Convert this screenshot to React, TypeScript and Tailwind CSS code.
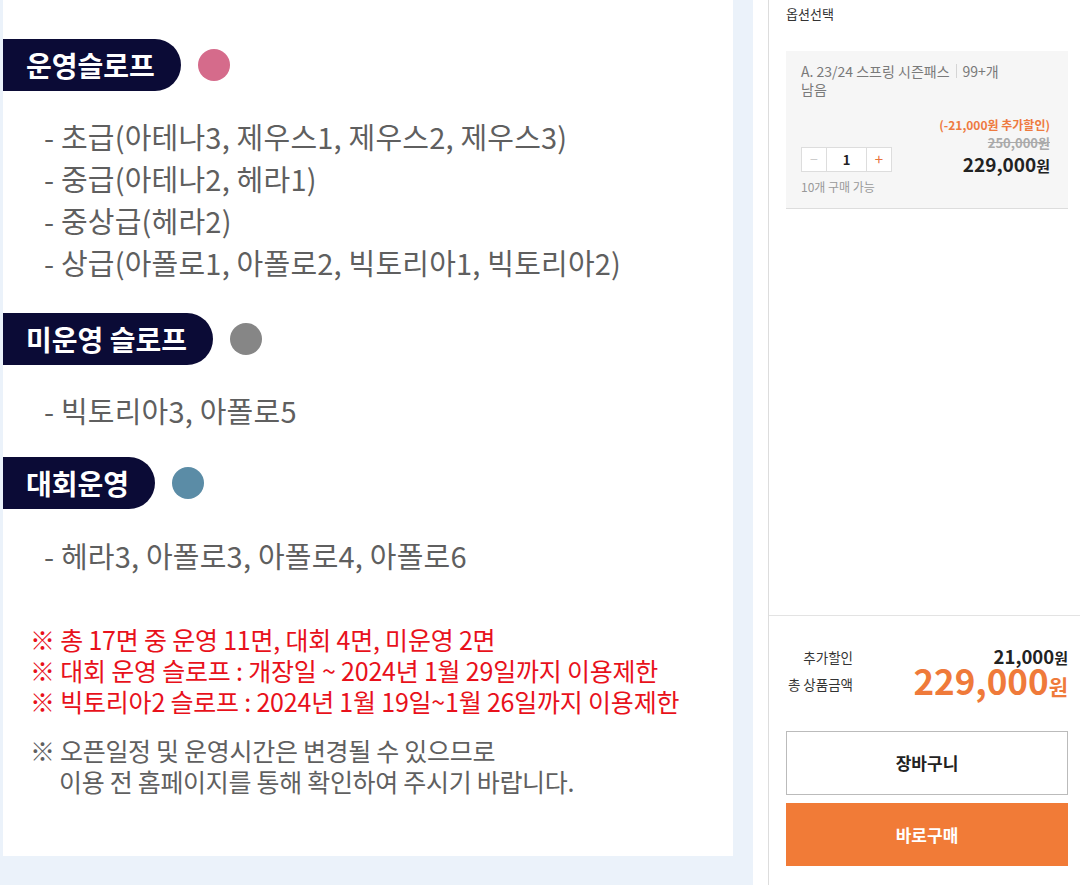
const KR = "font-['Noto_Sans_CJK_KR',_'Noto_Sans',_sans-serif]";

function Pill({ label, dot }: { label: string; dot: string }) {
  return (
    <div className="flex items-center">
      <div className="h-[52px] flex items-center bg-[#0b0b36] rounded-r-full pl-[23px] pr-[26px] text-white text-[28px] font-bold leading-none">
        {label}
      </div>
      <div className={`ml-[17px] w-[32px] h-[32px] rounded-full ${dot}`} />
    </div>
  );
}

function Lines({ items, className }: { items: string[]; className: string }) {
  return (
    <div className={`pl-[41px] text-[29px] leading-[42px] text-[#5f5f5f] tracking-[0.2px] ${className}`}>
      {items.map((t) => (
        <div key={t}>- {t}</div>
      ))}
    </div>
  );
}

function Poster() {
  return (
    <div className="w-[730px] h-[856px] bg-white pt-[39px]">
      <Pill label="운영슬로프" dot="bg-[#d56b8b]" />
      <Lines
        className="mt-[24px]"
        items={[
          "초급(아테나3, 제우스1, 제우스2, 제우스3)",
          "중급(아테나2, 헤라1)",
          "중상급(헤라2)",
          "상급(아폴로1, 아폴로2, 빅토리아1, 빅토리아2)",
        ]}
      />
      <div className="mt-[30px]">
        <Pill label="미운영 슬로프" dot="bg-[#868686]" />
      </div>
      <Lines className="mt-[24px]" items={["빅토리아3, 아폴로5"]} />
      <div className="mt-[26px]">
        <Pill label="대회운영" dot="bg-[#5b8ca6]" />
      </div>
      <Lines className="mt-[25px]" items={["헤라3, 아폴로3, 아폴로4, 아폴로6"]} />

      <div className="mt-[48px] pl-[27px] text-[25px] leading-[31px] text-[#e8111b] tracking-[-0.2px]">
        <div>※ 총 17면 중 운영 11면, 대회 4면, 미운영 2면</div>
        <div>※ 대회 운영 슬로프 : 개장일 ~ 2024년 1월 29일까지 이용제한</div>
        <div>※ 빅토리아2 슬로프 : 2024년 1월 19일~1월 26일까지 이용제한</div>
      </div>
      <div className="mt-[18px] pl-[27px] text-[25px] leading-[31px] text-[#606060] tracking-[-0.3px]">
        <div>※ 오픈일정 및 운영시간은 변경될 수 있으므로</div>
        <div className="pl-[29px]">이용 전 홈페이지를 통해 확인하여 주시기 바랍니다.</div>
      </div>
    </div>
  );
}

function OptionBox() {
  return (
    <div className="mt-[27px] bg-[#f6f6f6] border-b border-[#dddddd] h-[158px] pt-[11px] pl-[15px] pr-[18px]">
      <div className="text-[14px] leading-[18px] text-[#7a7a7a]">
        <div className="flex items-center">
          <span>A. 23/24 스프링 시즌패스</span>
          <span className="mx-[6px] w-px h-[14px] bg-[#d5d5d5]" />
          <span>99+개</span>
        </div>
        <div>남음</div>
      </div>
      <div className="mt-[18px] flex justify-between items-start">
        <div className="pt-[31px]">
          <div className="flex h-[25px] border border-[#dddddd] bg-white">
            <div className="w-[24px] flex items-center justify-center text-[#cccccc] text-[14px]">−</div>
            <div className="w-[41px] flex items-center justify-center border-x border-[#dddddd] text-[13px] font-bold text-[#222222]">1</div>
            <div className="w-[24px] flex items-center justify-center text-[#e8743b] text-[15px]">+</div>
          </div>
          <div className="mt-[7px] text-[12px] leading-[16px] text-[#999999]">10개 구매 가능</div>
        </div>
        <div className="text-right">
          <div className="text-[12px] leading-[18px] font-bold text-[#ee7a3f]">(-21,000원 추가할인)</div>
          <div className="text-[13px] leading-[18px] font-bold text-[#aaaaaa] line-through">250,000원</div>
          <div className="leading-[24px] font-bold text-[#222222]">
            <span className="text-[19px]">229,000</span>
            <span className="text-[15px]">원</span>
          </div>
        </div>
      </div>
    </div>
  );
}

function SidePanel() {
  return (
    <div className="w-[312px] h-full border-l border-[#dddddd] flex flex-col">
      <div className="pl-[17px] pr-[12px]">
        <div className="pt-[4px] text-[13px] leading-[20px] text-[#333333]">옵션선택</div>
        <OptionBox />
      </div>
      <div className="flex-1" />
      <div className="border-t border-[#e3e3e3] pl-[17px] pr-[12px] pt-[30px] pb-[19px]">
        <div className="flex items-center h-[22px]">
          <div className="w-[67px] text-right text-[13.5px] leading-[18px] text-[#333333]">추가할인</div>
          <div className="flex-1 text-right font-bold text-[#222222] leading-[20px]">
            <span className="text-[18.5px]">21,000</span>
            <span className="text-[15px]">원</span>
          </div>
        </div>
        <div className="flex items-center h-[32px]">
          <div className="w-[67px] text-right text-[13.5px] leading-[18px] text-[#333333] whitespace-nowrap">총 상품금액</div>
          <div className="flex-1 text-right font-bold text-[#ef7a3a] leading-[32px]">
            <span className="text-[35px]">229,000</span>
            <span className="text-[21px]">원</span>
          </div>
        </div>
        <div className="mt-[31px] h-[64px] border border-[#bbbbbb] flex items-center justify-center text-[17px] font-bold text-[#222222]">
          장바구니
        </div>
        <div className="mt-[8px] h-[63px] bg-[#f17b37] flex items-center justify-center text-[17px] font-bold text-white">
          바로구매
        </div>
      </div>
    </div>
  );
}

export default function App() {
  return (
    <div className={`w-[1080px] h-[885px] flex bg-white overflow-hidden ${KR}`}>
      <div className="w-[753px] h-full bg-[#ebf2fa] pl-[3px]">
        <Poster />
      </div>
      <div className="w-[15px]" />
      <SidePanel />
    </div>
  );
}
